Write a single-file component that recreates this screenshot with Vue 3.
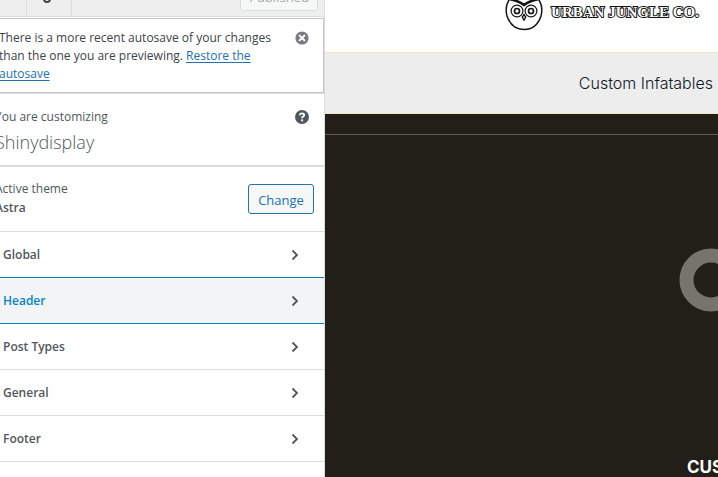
<script setup>
import { ref } from 'vue'

const sections = ['Global', 'Header', 'Post Types', 'General', 'Footer']
const active = ref('Header')
</script>

<template>
  <div class="customizer">
    <aside class="sidebar">
      <div class="panel">
        <header class="actions">
          <span class="close-cell"></span>
          <span class="tool-cell">
            <svg class="tool-icon" viewBox="0 0 16 16" aria-hidden="true">
              <circle cx="8" cy="11" r="3" fill="none" stroke="#3c434a" stroke-width="2" />
            </svg>
          </span>
          <button class="published" type="button" disabled>Published</button>
        </header>

        <div class="notice">
          <p>There is a more recent autosave of your changes than the one you are previewing. <a href="#">Restore the autosave</a></p>
          <button class="icon-button" type="button" aria-label="Dismiss">
            <svg viewBox="0 0 14 14">
              <circle cx="7" cy="7" r="6.6" fill="#787c82" />
              <path d="M4.6 4.6l4.8 4.8M9.4 4.6l-4.8 4.8" stroke="#fff" stroke-width="2" stroke-linecap="round" />
            </svg>
          </button>
        </div>

        <section class="site">
          <div>
            <p class="label">You are customizing</p>
            <h1>Shinydisplay</h1>
          </div>
          <button class="icon-button" type="button" aria-label="Help">
            <svg viewBox="0 0 14 14">
              <circle cx="7" cy="7" r="7" fill="#50575e" />
              <path d="M4.9 5.3c0-2.6 4.3-2.6 4.3-.2 0 1.5-2.1 1.5-2.1 3.1" fill="none" stroke="#fff" stroke-width="1.8" />
              <rect x="6.1" y="9.4" width="2" height="1.9" fill="#fff" />
            </svg>
          </button>
        </section>

        <section class="theme">
          <div>
            <p class="label">Active theme</p>
            <h2>Astra</h2>
          </div>
          <button class="change" type="button">Change</button>
        </section>

        <nav>
          <button
            v-for="name in sections"
            :key="name"
            type="button"
            class="row"
            :class="{ active: name === active }"
            @click="active = name"
          >
            <span>{{ name }}</span>
            <svg viewBox="0 0 8 12" aria-hidden="true">
              <path d="M1.5 1.5L6 6l-4.500 4.500" fill="none" stroke="#50575e" stroke-width="1.800" />
            </svg>
          </button>
        </nav>
      </div>
    </aside>

    <main class="preview">
      <div class="brand">
        <svg class="owl" viewBox="0 0 38 38" aria-hidden="true">
          <g fill="none" stroke="#151515">
            <path d="M4 7C0 13 1 19 2 23C5 32 11 36.500 19 36.500S33 32 36 23C37 19 38 13 34 7" stroke-width="1.5" />
            <path d="M4 6C10 7 15 9 19 12C23 9 28 7 34 6" stroke-width="2.600" />
            <circle cx="12" cy="18" r="5.900" stroke-width="1.2" />
            <circle cx="26" cy="18" r="5.900" stroke-width="1.2" />
            <circle cx="12" cy="18" r="2.500" stroke-width="1.700" />
            <circle cx="26" cy="18" r="2.500" stroke-width="1.700" />
            <path d="M19 21.500L17.300 24L19 27L20.700 24Z" stroke-width="1.400" />
          </g>
        </svg>
        <span class="brand-name">URBAN JUNGLE CO.</span>
      </div>
      <nav class="menu"><a href="#">Custom Infatables</a></nav>
      <div class="strip"></div>
      <section class="hero">
        <svg class="ring" viewBox="0 0 64 64" aria-hidden="true">
          <circle cx="32" cy="32" r="24.500" fill="none" stroke="#77746c" stroke-width="14" />
        </svg>
        <p class="caption">CUSTOM</p>
      </section>
    </main>
  </div>
</template>

<style>
body {
  margin: 0;
  overflow: hidden;
}
</style>

<style scoped>
* {
  box-sizing: border-box;
}
p,
h1,
h2 {
  margin: 0;
}
.customizer {
  display: grid;
  grid-template-columns: 325px minmax(0, 1fr);
  height: 100vh;
  overflow: hidden;
  background: #fff;
}
.sidebar {
  overflow: hidden;
  border-right: 1px solid #dcdcde;
  color: #50575e;
  font: 12px/18px "Open Sans", "Noto Sans", sans-serif;
}
.panel {
  margin-left: -16px;
}
button {
  font: inherit;
  cursor: pointer;
}
.actions {
  display: flex;
  align-items: flex-end;
  height: 17px;
  border-bottom: 1px solid #dcdcde;
  background: #eee;
}
.close-cell {
  width: 42px;
}
.tool-cell {
  display: flex;
  align-items: flex-end;
  justify-content: center;
  width: 46px;
  height: 16px;
  border: solid #dcdcde;
  border-width: 0 1px;
}
.tool-icon {
  width: 16px;
  height: 16px;
  margin: 0 4px 12px 0;
}
.published {
  height: 30px;
  width: 78px;
  margin: 0 6px 5px auto;
  padding: 2px 0 0;
  border: 1px solid #dcdcde;
  border-radius: 3px;
  background: #f6f7f7;
  color: #a7aaad;
  font-size: 13px;
}
.notice {
  display: flex;
  justify-content: space-between;
  align-items: flex-start;
  margin-top: 1px;
  padding: 10px 14px 9px 14px;
  border: 1px solid #c3c4c7;
  color: #3c434a;
}
.notice p {
  width: 284px;
}
.notice a {
  color: #2271b1;
  text-underline-offset: 2px;
}
.icon-button {
  flex: none;
  width: 14px;
  height: 14px;
  padding: 0;
  border: 0;
  background: none;
}
.icon-button svg {
  display: block;
}
.notice .icon-button {
  margin-top: 2px;
}
.site {
  display: flex;
  justify-content: space-between;
  padding: 14px 15px 10px 11px;
  border-top: 1px solid #dcdcde;
  border-bottom: 2px solid #dcdcde;
}
.site .icon-button {
  margin-top: 2px;
}
h1 {
  margin-top: 4px;
  font-size: 18px;
  line-height: 25px;
  font-weight: 300;
}
.theme {
  display: flex;
  align-items: center;
  justify-content: space-between;
  padding: 13px 10px 13px 11px;
  border-bottom: 1px solid #dcdcde;
}
h2 {
  font-size: 12px;
  line-height: 20px;
  font-weight: 600;
}
.change {
  width: 66px;
  height: 30px;
  padding: 1px 0 0;
  border: 1px solid #2271b1;
  border-radius: 3px;
  background: #f6f7f7;
  color: #2271b1;
  font-size: 13px;
}
.row {
  display: flex;
  align-items: center;
  justify-content: space-between;
  width: 100%;
  height: 46px;
  padding: 1px 25px 0 19px;
  border: 0;
  border-bottom: 1px solid #dcdcde;
  background: #fff;
  color: #50575e;
  font-weight: 600;
}
.row svg {
  width: 8px;
  height: 12px;
}
.row.active {
  height: 47px;
  margin-top: -1px;
  border-top: 1px solid #0085ba;
  border-bottom-color: #0085ba;
  background: #f3f4f6;
  color: #0284c7;
}
.preview {
  display: flex;
  flex-direction: column;
  overflow: hidden;
}
.brand {
  display: flex;
  flex: none;
  align-items: flex-end;
  justify-content: flex-end;
  gap: 8px;
  height: 52px;
  padding: 0 19px 21px 0;
}
.owl {
  flex: none;
  width: 38px;
  height: 38px;
}
.brand-name {
  padding-bottom: 7px;
  color: #fff;
  font: bold 15px/24px "Liberation Serif", serif;
  -webkit-text-stroke: 2px #151515;
  paint-order: stroke fill;
  white-space: nowrap;
}
.menu {
  display: flex;
  flex: none;
  align-items: center;
  justify-content: flex-end;
  height: 62px;
  padding-right: 5px;
  border: solid #f3e6bd;
  border-width: 1px 0;
  background: #ededed;
}
.menu a {
  color: #0f172a;
  font: 300 16px/24px Inter, sans-serif;
  text-decoration: none;
}
.strip {
  flex: none;
  height: 21px;
  border-bottom: 1px solid #5d5b55;
  background: #221f18;
}
.hero {
  display: flex;
  flex: 1;
  flex-direction: column;
  align-items: flex-end;
  justify-content: space-between;
  padding-top: 113px;
  background: #221f18;
}
.ring {
  width: 64px;
  height: 64px;
  margin-right: -25px;
}
.caption {
  width: 31px;
  color: #fff;
  font: bold 17px/20px Inter, sans-serif;
}
</style>
